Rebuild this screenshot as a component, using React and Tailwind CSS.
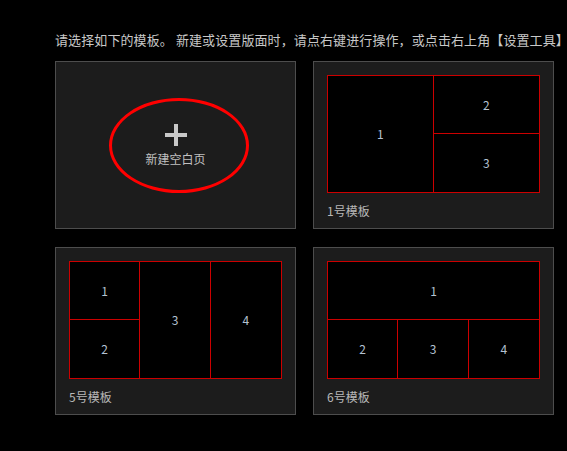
import React from "react";

const font = { fontFamily: '"Microsoft YaHei","Noto Sans CJK SC","Noto Sans",sans-serif' };

function Cell({ children, className = "" }) {
  return (
    <div className={"flex items-center justify-center text-[12px] text-[#b4c2d2] " + className}>
      {children}
    </div>
  );
}

function Card({ label, children }) {
  return (
    <div className="flex h-[168px] flex-col border border-[#4d4d4d] bg-[#1c1c1c] px-[13px] pt-[13px]">
      <div className="h-[118px] w-full border border-[#cc0000] bg-black">{children}</div>
      <div className="flex flex-1 items-center text-[12px] text-[#b8b8b8]">{label}</div>
    </div>
  );
}

export default function App() {
  return (
    <div className="min-h-[451px] w-[567px] bg-black pl-[55px] pt-[31px]" style={font}>
      <div className="w-max whitespace-nowrap text-[13px] leading-[18px] tracking-[0.1px] text-[#c8c8c8]">
        请选择如下的模板。 新建或设置版面时，请点右键进行操作，或点击右上角【设置工具】
      </div>
      <div className="mt-[12px] grid grid-cols-[241px_241px] gap-x-[17px] gap-y-[18px]">
        <div className="relative flex h-[168px] flex-col items-center justify-center border border-[#4d4d4d] bg-[#1c1c1c]">
          <svg width="22" height="22" viewBox="0 0 22 22">
            <rect x="9" y="0" width="4" height="22" fill="#c8c8c8" />
            <rect x="0" y="9" width="22" height="4" fill="#c8c8c8" />
          </svg>
          <div className="mt-[5px] text-[12px] leading-[16px] text-[#c0c0c0]">新建空白页</div>
          <div className="absolute left-[53px] top-[36px] h-[95px] w-[140px] rounded-[50%] border-[3px] border-[#ff0000]" />
        </div>

        <Card label="1号模板">
          <div className="grid h-full grid-cols-2">
            <Cell className="border-r border-[#cc0000]">1</Cell>
            <div className="grid grid-rows-2">
              <Cell className="border-b border-[#cc0000]">2</Cell>
              <Cell>3</Cell>
            </div>
          </div>
        </Card>

        <Card label="5号模板">
          <div className="grid h-full grid-cols-3">
            <div className="grid grid-rows-2 border-r border-[#cc0000]">
              <Cell className="border-b border-[#cc0000]">1</Cell>
              <Cell>2</Cell>
            </div>
            <Cell className="border-r border-[#cc0000]">3</Cell>
            <Cell>4</Cell>
          </div>
        </Card>

        <Card label="6号模板">
          <div className="grid h-full grid-rows-2">
            <Cell className="border-b border-[#cc0000]">1</Cell>
            <div className="grid grid-cols-3">
              <Cell className="border-r border-[#cc0000]">2</Cell>
              <Cell className="border-r border-[#cc0000]">3</Cell>
              <Cell>4</Cell>
            </div>
          </div>
        </Card>
      </div>
    </div>
  );
}
